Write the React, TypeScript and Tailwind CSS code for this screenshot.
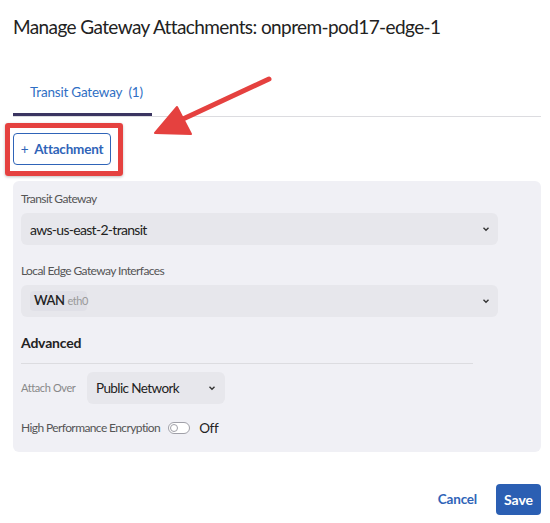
import { useState } from "react";

function Chevron() {
  return (
    <svg width="8" height="6" viewBox="0 0 8 6" className="text-[#333]">
      <path d="M1.5 1.8 L4 4.2 L6.5 1.8" fill="none" stroke="currentColor" strokeWidth="1.4" />
    </svg>
  );
}

export default function App() {
  const [hpe, setHpe] = useState(false);

  return (
    <div className="relative h-[523px] w-[550px] bg-white font-['Lato',sans-serif] text-[#222]">
      <div className="pl-[13px] pr-[9px] pt-[15px]">
        <h1 className="text-[19px] leading-6 tracking-[-0.6px]">Manage Gateway Attachments: onprem-pod17-edge-1</h1>

        <div className="mt-[43px] flex border-b border-[#dcdce0]">
          <div className="w-[139px] border-b-[3px] border-[#3b3561] pb-[11px] pl-[17px] text-[13.5px] leading-5 tracking-[-0.2px] text-[#2f6fc4]">
            Transit Gateway&nbsp; (1)
          </div>
        </div>

        <button
          type="button"
          className="mt-[16px] flex h-8 w-[98px] items-center justify-center gap-1.5 rounded border border-[#2f64b8] bg-white text-[13.5px] font-bold tracking-[-0.2px] text-[#2f64b8]"
        >
          <span className="font-normal">+</span>
          Attachment
        </button>

        <div className="mt-4 rounded-md bg-[#f0f0f5] pb-[16px] pl-[8px] pt-[10px]">
          <label className="block text-[12px] leading-4 tracking-[-0.6px] text-[#555]">Transit Gateway</label>
          <div className="mt-[6px] flex h-8 w-[477px] items-center justify-between rounded-md bg-[#e7e7ec] pl-[9px] pr-[8px] text-[14px] tracking-[-0.7px]">
            <span>aws-us-east-2-transit</span>
            <Chevron />
          </div>

          <label className="mt-[18px] block text-[12px] leading-4 tracking-[-0.6px] text-[#555]">
            Local Edge Gateway Interfaces
          </label>
          <div className="mt-[6px] flex h-8 w-[477px] items-center justify-between rounded-md bg-[#e7e7ec] pl-[9px] pr-[8px]">
            <span className="flex h-5 w-[57px] items-center gap-[3px] rounded bg-[#e0e0e7] px-[4px]">
              <span className="text-[13px] font-semibold tracking-[-0.5px] text-[#222]">WAN</span>
              <span className="text-[11px] tracking-[-0.4px] text-[#999]">eth0</span>
            </span>
            <Chevron />
          </div>

          <div className="mt-4 w-[452px] border-b border-[#dcdce0] pb-[10px] text-[14px] font-bold leading-5 tracking-[-0.2px]">
            Advanced
          </div>

          <div className="mt-[8px] flex items-center">
            <span className="w-[66px] text-[11px] tracking-[-0.4px] text-[#888]">Attach Over</span>
            <div className="flex h-8 w-[138px] items-center justify-between rounded-md bg-[#e7e7ec] pl-[9px] pr-[9px] text-[13.5px] tracking-[-0.6px]">
              <span>Public Network</span>
              <Chevron />
            </div>
          </div>

          <div className="mt-[16px] flex h-4 items-center">
            <span className="text-[12px] tracking-[-0.6px] text-[#555]">High Performance Encryption</span>
            <button
              type="button"
              onClick={() => setHpe(!hpe)}
              className="ml-[8px] flex h-[12px] w-[22px] items-center rounded-full border border-[#a0a0a8] bg-white px-[1px]"
            >
              <span className="h-[8px] w-[8px] rounded-full border border-[#a0a0a8]" />
            </button>
            <span className="ml-[9px] text-[13.5px] tracking-[-0.3px]">{hpe ? "On" : "Off"}</span>
          </div>
        </div>

        <div className="mt-[32px] flex items-center justify-end gap-[19px]">
          <button type="button" className="text-[13.5px] font-bold tracking-[-0.2px] text-[#2f64b8]">
            Cancel
          </button>
          <button type="button" className="h-[31px] w-[45px] rounded bg-[#2b5fb3] text-[14px] font-bold text-white">
            Save
          </button>
        </div>
      </div>

      {/* annotation: red box + arrow */}
      <div className="pointer-events-none absolute left-[5px] top-[123px] h-[53px] w-[118px] rounded-[3px] border-[5px] border-[#e5413f] shadow-[0_1px_3px_rgba(0,0,0,0.25)]" />
      <svg className="pointer-events-none absolute left-0 top-0" width="550" height="200" viewBox="0 0 550 200">
        <line x1="269" y1="79" x2="183" y2="119" stroke="#e5413f" strokeWidth="5" strokeLinecap="round" />
        <polygon points="155,133 177,107 191,134" fill="#e5413f" stroke="#e5413f" strokeWidth="2" strokeLinejoin="round" />
      </svg>
    </div>
  );
}
